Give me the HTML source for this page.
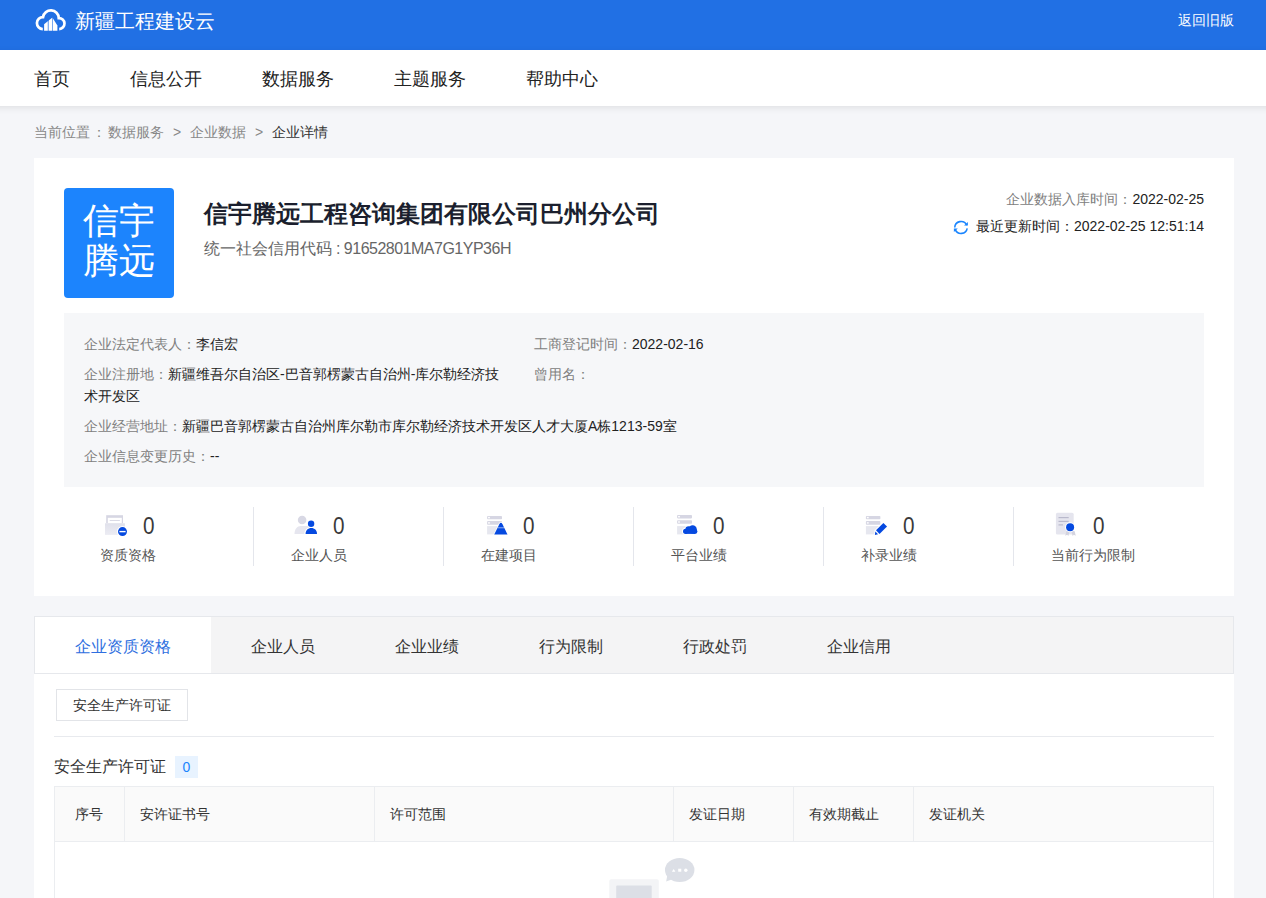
<!DOCTYPE html>
<html><head><meta charset="utf-8">
<style>
*{margin:0;padding:0;box-sizing:border-box}
html,body{width:1266px;height:898px;overflow:hidden}
body{font-family:"Liberation Sans",sans-serif;background:#f5f6f9;color:#333;position:relative}
.abs{position:absolute;white-space:nowrap}
#hdr{position:absolute;left:0;top:0;width:1266px;height:50px;background:#2170e4}
#nav{position:absolute;left:0;top:50px;width:1266px;height:56px;background:#fff}
#shadow{position:absolute;left:-30px;top:50px;width:1326px;height:56px;box-shadow:0 2px 7px rgba(0,0,0,0.09)}
.nav{position:absolute;top:1px;line-height:56px;font-size:18px;color:#222}
.crumb{font-size:14px;line-height:20px;color:#888}
#card{position:absolute;left:34px;top:158px;width:1200px;height:438px;background:#fff}
#logo{position:absolute;left:30px;top:30px;width:110px;height:110px;border-radius:4px;background:#1c84fd;color:#fff;font-size:36px;line-height:40px;text-align:center;padding-top:13px}
#info{position:absolute;left:30px;top:155px;width:1140px;height:174px;background:#f6f7f9}
.lbl{color:#808080}
.val{color:#222}
.row{position:absolute;font-size:14px;line-height:22px;white-space:nowrap}
.stat{position:absolute;top:349px;width:190px;height:59px}
.stat .div{position:absolute;left:-1px;top:0;width:1px;height:59px;background:#e4e6ec}
.stat .ic{position:absolute;left:40px;top:5px;width:24px;height:24px;overflow:visible}
.stat .num{position:absolute;left:78.5px;top:4.5px;font-size:23px;line-height:28px;color:#3a3a3a;transform:scaleX(0.9);transform-origin:0 0}
.stat .nm{position:absolute;left:36.5px;top:38px;font-size:14px;line-height:20px;color:#555}
#tabs{position:absolute;left:34px;top:616px;width:1200px;height:58px;background:#f4f4f5;border:1px solid #e6e8ec}
.tab{position:absolute;top:0;height:56px;line-height:60px;font-size:16px;color:#333;padding:0 40px}
.tab.on{background:#fff;color:#2f6fe0}
.th{top:17px;font-size:14px;line-height:20px;color:#333}
#panel{position:absolute;left:34px;top:674px;width:1200px;height:300px;background:#fff}
</style></head><body>
<div id="hdr">
  <svg class="abs" style="left:30px;top:4px" width="42" height="32" viewBox="0 0 42 32">
    <path d="M12.8 25.05 A6 6 0 0 1 13.05 13.05 A7.9 7.9 0 0 1 28.75 14.05 A5.5 5.5 0 0 1 29.2 25.05" fill="none" stroke="#fff" stroke-width="2.7"/>
    <path d="M14.1 20.3 L22.4 13.4 L27.4 21.4 L27.4 26.7 L14.1 26.7Z" fill="#fff"/>
    <rect x="17.8" y="16" width="0.75" height="11" fill="#2170e4"/><rect x="22.3" y="13" width="0.6" height="14" fill="#2170e4"/>
  </svg>
  <div class="abs" style="left:75px;top:8px;font-size:20px;line-height:26px;color:#fff">新疆工程建设云</div>
  <div class="abs" style="left:1178px;top:10px;font-size:14px;line-height:20px;color:#fff">返回旧版</div>
</div>
<div id="shadow"></div>
<div id="nav">
  <div class="nav" style="left:34px">首页</div>
  <div class="nav" style="left:130px">信息公开</div>
  <div class="nav" style="left:262px">数据服务</div>
  <div class="nav" style="left:394px">主题服务</div>
  <div class="nav" style="left:526px">帮助中心</div>
</div>
<div class="abs crumb" style="left:34px;top:122px">当前位置</div>
<div class="abs crumb" style="left:92px;top:122px">：</div>
<div class="abs crumb" style="left:108px;top:122px">数据服务</div>
<div class="abs crumb" style="left:173px;top:122px">&gt;</div>
<div class="abs crumb" style="left:190px;top:122px">企业数据</div>
<div class="abs crumb" style="left:255px;top:122px">&gt;</div>
<div class="abs crumb" style="left:272px;top:122px;color:#333">企业详情</div>

<div id="card">
  <div id="logo">信宇<br>腾远</div>
  <div class="abs" style="left:170px;top:40px;font-size:24px;line-height:32px;font-weight:bold;color:#1b1f2e">信宇腾远工程咨询集团有限公司巴州分公司</div>
  <div class="abs" style="left:170px;top:80px;font-size:16px;line-height:22px;color:#666">统一社会信用代码<span style="letter-spacing:-0.5px"> : 91652801MA7G1YP36H</span></div>
  <div class="abs" style="right:30px;top:31px;font-size:14px;line-height:20px;color:#222"><span class="lbl">企业数据入库时间：</span>2022-02-25</div>
  <div class="abs" style="right:30px;top:58px;font-size:14px;line-height:20px;color:#222;position:absolute">
    <svg class="abs" style="left:-23px;top:3px" width="16" height="16" viewBox="0 0 16 16"><path d="M1.75 8.6 A6.25 6.25 0 0 1 13.7 6.2" fill="none" stroke="#1a85fe" stroke-width="1.55"/><path d="M14.2 9.3 A6.25 6.25 0 0 1 2.3 10.6" fill="none" stroke="#1a85fe" stroke-width="1.55"/><path d="M11 6.5 L14.9 2.9 L14.9 6.5Z" fill="#1a85fe"/><path d="M0.9 9.6 L4.8 9.6 L0.9 13.1Z" fill="#1a85fe"/></svg>最近更新时间：2022-02-25 12:51:14</div>

  <div id="info">
    <div class="row" style="left:20px;top:20px"><span class="lbl">企业法定代表人：</span><span class="val">李信宏</span></div>
    <div class="row" style="left:470px;top:20px"><span class="lbl">工商登记时间：</span><span class="val">2022-02-16</span></div>
    <div class="row" style="left:20px;top:50px"><span class="lbl">企业注册地：</span><span class="val">新疆维吾尔自治区-巴音郭楞蒙古自治州-库尔勒经济技<br>术开发区</span></div>
    <div class="row" style="left:470px;top:50px"><span class="lbl">曾用名：</span></div>
    <div class="row" style="left:20px;top:102px"><span class="lbl">企业经营地址：</span><span class="val">新疆巴音郭楞蒙古自治州库尔勒市库尔勒经济技术开发区人才大厦A栋1213-59室</span></div>
    <div class="row" style="left:20px;top:132px"><span class="lbl">企业信息变更历史：</span><span class="val">--</span></div>
  </div>

  <div class="stat" style="left:30px">
    <svg class="ic" viewBox="0 0 24 24"><defs><linearGradient id="g1" x1="0" y1="0" x2="0" y2="1"><stop offset="0" stop-color="#e0e1eb"/><stop offset="1" stop-color="#ececf3"/></linearGradient></defs>
<rect x="2.2" y="3.2" width="16.8" height="8.2" fill="#d6d6e3"/><rect x="3.8" y="5.8" width="14" height="5.4" fill="#fff"/><rect x="5.7" y="8" width="10.2" height="0.9" fill="#d6d6e3"/>
<rect x="1" y="11.3" width="19.9" height="11.6" fill="url(#g1)"/><circle cx="18.5" cy="19.6" r="5.6" fill="#fff"/><circle cx="18.5" cy="19.6" r="4.5" fill="#0549e0"/><rect x="15.4" y="18.9" width="6.2" height="1.4" fill="#fff"/></svg><div class="num">0</div><div class="nm" style="left:35.5px">资质资格</div>
  </div>
  <div class="stat" style="left:220px"><div class="div"></div>
    <svg class="ic" viewBox="0 0 24 24"><circle cx="8.1" cy="8" r="4.3" fill="#d8d8e4"/><path d="M0.5 22 C0.5 17 3 14 7 14 L12.5 14 C14 14 15 14.5 15.5 15 L11 22Z" fill="#e6e6ef"/>
<path d="M10.2 22.6 C10.2 18 13 15.3 17.2 15.3 C21.4 15.3 24 18 24 22.6Z" fill="#fff"/><circle cx="17.1" cy="11.7" r="4.2" fill="#fff"/>
<circle cx="17.1" cy="11.7" r="3.2" fill="#0549e0"/><path d="M11.6 21.9 C11.6 18.3 14 16 17.3 16 C20.6 16 23 18.3 23 21.9Z" fill="#0549e0"/></svg><div class="num">0</div><div class="nm">企业人员</div>
  </div>
  <div class="stat" style="left:410px"><div class="div"></div>
    <svg class="ic" viewBox="0 0 24 24"><rect x="3.1" y="3.9" width="14.9" height="3.4" rx="0.8" fill="#d6d6e3"/><rect x="4.1" y="4.9" width="1.8" height="1.4" fill="#fff"/>
<rect x="3.1" y="9.1" width="14.9" height="3.6" rx="0.8" fill="#d6d6e3"/><rect x="4.1" y="10.2" width="1.8" height="1.4" fill="#fff"/>
<rect x="3.1" y="14.1" width="14.9" height="8.3" fill="#e6e7ef"/><path d="M9 23.4 L14.8 11.6 Q16.9 8 19 11.6 L24.7 23.4Z" fill="#fff"/><path d="M10.2 22.4 L15.3 12.2 Q16.9 9.4 18.5 12.2 L23.5 22.4Z" fill="#0549e0"/><rect x="13.6" y="15.5" width="6.6" height="0.7" fill="#fff" opacity="0.8"/></svg><div class="num">0</div><div class="nm">在建项目</div>
  </div>
  <div class="stat" style="left:600px"><div class="div"></div>
    <svg class="ic" viewBox="0 0 24 24"><rect x="3.1" y="3.0" width="14.9" height="3.4" rx="0.8" fill="#d6d6e3"/><rect x="4.1" y="4.0" width="1.8" height="1.4" fill="#fff"/>
<rect x="3.1" y="8.2" width="14.9" height="3.6" rx="0.8" fill="#d6d6e3"/><rect x="4.1" y="9.299999999999999" width="1.8" height="1.4" fill="#fff"/>
<rect x="3.1" y="14.1" width="14.9" height="8.3" fill="#e6e7ef"/><circle cx="11.6" cy="19.3" r="3.6" fill="#fff"/><circle cx="14.6" cy="17.4" r="4.2" fill="#fff"/><circle cx="18.6" cy="17.4" r="5.2" fill="#fff"/><circle cx="21" cy="19.5" r="3.4" fill="#fff"/><rect x="11.6" y="17.4" width="9.4" height="5.5" fill="#fff"/><circle cx="11.6" cy="19.3" r="2.6" fill="#0549e0"/><circle cx="14.6" cy="17.4" r="3.2" fill="#0549e0"/><circle cx="18.6" cy="17.4" r="4.2" fill="#0549e0"/><circle cx="21" cy="19.5" r="2.4" fill="#0549e0"/><rect x="11.6" y="17.4" width="9.4" height="4.5" fill="#0549e0"/></svg><div class="num">0</div><div class="nm">平台业绩</div>
  </div>
  <div class="stat" style="left:790px"><div class="div"></div>
    <svg class="ic" viewBox="0 0 24 24"><rect x="1.9" y="3.9" width="14.499999999999998" height="3.4" rx="0.8" fill="#d6d6e3"/><rect x="2.9" y="4.9" width="1.8" height="1.4" fill="#fff"/>
<rect x="1.9" y="9.1" width="14.499999999999998" height="3.6" rx="0.8" fill="#d6d6e3"/><rect x="2.9" y="10.2" width="1.8" height="1.4" fill="#fff"/>
<rect x="1.9" y="14.1" width="14.499999999999998" height="8.3" fill="#e6e7ef"/><path d="M19.36 10.9 L23.04 14.46 L15.47 21.9 L12 18.24Z" fill="#fff" stroke="#fff" stroke-width="2"/><path d="M11.3 19.4 L14.1 22.3 L10.9 22.9Z" fill="#fff" stroke="#fff" stroke-width="1.6"/>
<path d="M19.36 10.9 L23.04 14.46 L15.47 21.9 L12 18.24Z" fill="#0549e0"/><path d="M11.3 19.4 L14.1 22.3 L10.9 22.9Z" fill="#0549e0"/></svg><div class="num">0</div><div class="nm">补录业绩</div>
  </div>
  <div class="stat" style="left:980px"><div class="div"></div>
    <svg class="ic" viewBox="0 0 24 24"><rect x="1.9" y="0.8" width="17.8" height="21.8" rx="1.6" fill="#e5e5ee"/>
<rect x="4.5" y="5" width="10.2" height="1.2" fill="#b9b9cc"/><rect x="4.5" y="8.8" width="10.2" height="1.2" fill="#b9b9cc"/><rect x="4.5" y="12.3" width="4.5" height="1.2" fill="#b9b9cc"/>
<path d="M12.5 19 L11.2 23.8 L13.2 22.8 L14.4 24 L15.5 19.5Z M17.5 19.5 L18.6 24 L19.8 22.8 L21.8 23.8 L20.5 19Z" fill="#d3d3df"/>
<circle cx="16.1" cy="15.3" r="5" fill="#fff"/><circle cx="16.1" cy="15.3" r="4" fill="#0549e0"/></svg><div class="num">0</div><div class="nm">当前行为限制</div>
  </div>
</div>

<div id="tabs">
  <div class="tab on" style="left:0">企业资质资格</div>
  <div class="tab" style="left:176px">企业人员</div>
  <div class="tab" style="left:320px">企业业绩</div>
  <div class="tab" style="left:464px">行为限制</div>
  <div class="tab" style="left:608px">行政处罚</div>
  <div class="tab" style="left:752px">企业信用</div>
</div>
<div id="panel">
  <div class="abs" style="left:22px;top:15px;width:132px;height:32px;border:1px solid #e2e4e8;font-size:14px;line-height:30px;text-align:center;color:#333">安全生产许可证</div>
  <div class="abs" style="left:20px;top:62px;width:1160px;height:1px;background:#e8eaee"></div>
  <div class="abs" style="left:20px;top:82px;font-size:16px;line-height:22px;color:#333">安全生产许可证</div>
  <div class="abs" style="left:141px;top:82px;width:23px;height:22px;background:#e8f3ff;color:#1c84fd;font-size:14px;line-height:22px;text-align:center">0</div>
  <div class="abs" style="left:20px;top:112px;width:1160px;height:300px;border:1px solid #ebedf0">
    <div class="abs" style="left:0;top:0;width:1158px;height:55px;background:#fafafa;border-bottom:1px solid #ebedf0"></div>
    <div class="abs" style="left:69px;top:0;width:1px;height:54px;background:#ebedf0"></div>
    <div class="abs" style="left:319px;top:0;width:1px;height:54px;background:#ebedf0"></div>
    <div class="abs" style="left:618px;top:0;width:1px;height:54px;background:#ebedf0"></div>
    <div class="abs" style="left:738px;top:0;width:1px;height:54px;background:#ebedf0"></div>
    <div class="abs" style="left:858px;top:0;width:1px;height:54px;background:#ebedf0"></div>
    <div class="abs th" style="left:20px">序号</div>
    <div class="abs th" style="left:85px">安许证书号</div>
    <div class="abs th" style="left:335px">许可范围</div>
    <div class="abs th" style="left:634px">发证日期</div>
    <div class="abs th" style="left:754px">有效期截止</div>
    <div class="abs th" style="left:874px">发证机关</div>
  </div>
</div>
<svg class="abs" style="left:600px;top:850px" width="100" height="48" viewBox="0 0 100 48">
  <rect x="9.3" y="29.2" width="49.5" height="30" rx="1.8" fill="#f3f4f6"/>
  <rect x="16.2" y="35.5" width="35.5" height="30" rx="1" fill="#dcdfe6"/>
  <ellipse cx="79.7" cy="20" rx="14.75" ry="12" fill="#dcdfe6"/>
  <path d="M67.5 24 L66.2 31.6 L73 29Z" fill="#dcdfe6"/>
  <path d="M71.9 21.7 L73.65 18.9 L75.4 21.7Z" fill="#fff"/>
  <rect x="78.2" y="18.7" width="3.1" height="3" fill="#fff"/>
  <circle cx="85.8" cy="20.2" r="1.7" fill="#fff"/>
</svg>
</body></html>
